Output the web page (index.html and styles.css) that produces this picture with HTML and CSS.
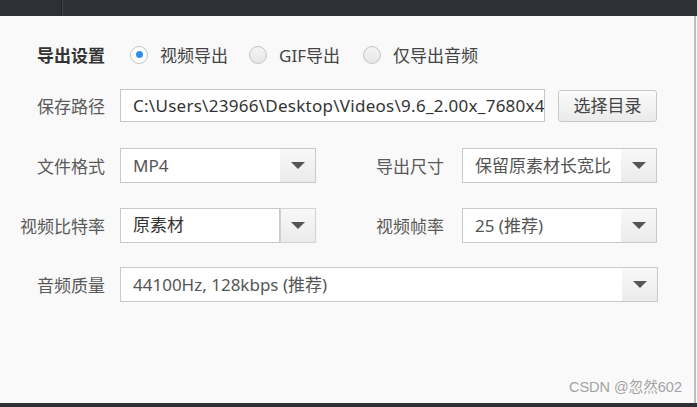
FILE: index.html
```html
<!DOCTYPE html>
<html lang="zh">
<head>
<meta charset="utf-8">
<title>导出设置</title>
<link rel="stylesheet" href="styles.css">
</head>
<body>
<div class="topbar"><div class="tab"></div><div class="tab-div"></div></div>
<div class="main">
  <div class="panel">
    <div class="row r1">
      <div class="lbl strong">导出设置</div>
      <div class="radios">
        <label class="radio"><span class="circle on"></span><span>视频导出</span></label>
        <label class="radio"><span class="circle"></span><span>GIF导出</span></label>
        <label class="radio"><span class="circle"></span><span>仅导出音频</span></label>
      </div>
    </div>
    <div class="row r2">
      <div class="lbl">保存路径</div>
      <div class="path">C:\Users\23966\Desktop\Videos\9.6_2.00x_7680x4</div>
      <div class="btn">选择目录</div>
    </div>
    <div class="row r3">
      <div class="lbl">文件格式</div>
      <div class="select"><span class="val">MP4</span><span class="arr"><i></i></span></div>
      <div class="lbl2">导出尺寸</div>
      <div class="select w2"><span class="val">保留原素材长宽比</span><span class="arr"><i></i></span></div>
    </div>
    <div class="row r4">
      <div class="lbl">视频比特率</div>
      <div class="combo"><span class="cval">原素材</span><span class="carr"><i></i></span></div>
      <div class="lbl2">视频帧率</div>
      <div class="select w2"><span class="val">25 (推荐)</span><span class="arr"><i></i></span></div>
    </div>
    <div class="row r5">
      <div class="lbl">音频质量</div>
      <div class="select wide"><span class="val">44100Hz, 128kbps (推荐)</span><span class="arr"><i></i></span></div>
    </div>
    <div class="mark">CSDN @忽然602</div>
  </div>
  <div class="vline"></div>
</div>
<div class="bottombar"></div>
</body>
</html>
```
FILE: styles.css
```css
* { box-sizing: border-box; }
html, body { margin: 0; padding: 0; }
body {
  width: 697px;
  height: 407px;
  overflow: hidden;
  background: #f9f9f9;
  font-family: "Noto Sans", "Noto Sans CJK SC", sans-serif;
  font-size: 17px;
  color: #555;
  display: flex;
  flex-direction: column;
}
.topbar {
  height: 16px;
  background: #2f3035;
  display: flex;
  flex: none;
}
.tab { width: 61px; }
.tab-div { width: 2px; background: #1f2024; border-right: 1px solid #45464b; }
.main {
  flex: 1;
  display: flex;
}
.panel {
  flex: 1;
  display: flex;
  flex-direction: column;
  padding-top: 23px;
}
.vline {
  width: 2px;
  background: #bdbdbd;
  margin-right: 1px;
}
.bottombar {
  height: 4px;
  background: #2f3035;
  flex: none;
}
.row {
  display: flex;
  align-items: center;
}
.r1 { height: 34px; }
.r2 { height: 33px; margin-top: 16px; }
.r3 { height: 35px; margin-top: 26px; }
.r4 { height: 35px; margin-top: 25px; }
.r5 { height: 35px; margin-top: 24px; }
.lbl {
  width: 105px;
  margin-right: 15px;
  text-align: right;
  white-space: nowrap;
  color: #5a5a5a;
}
.lbl.strong { font-weight: bold; color: #333; margin-top: -3px; }
.lbl2 {
  width: 128px;
  margin-right: 18px;
  text-align: right;
  color: #5a5a5a;
}
.radios {
  display: grid;
  grid-template-columns: 119px 114px auto;
  margin-left: 10px;
  margin-top: -3px;
  color: #444;
}
.radio {
  display: flex;
  align-items: center;
  gap: 12px;
}
.circle {
  width: 18px;
  height: 18px;
  border-radius: 50%;
  border: 1px solid #c4c4c4;
  background: linear-gradient(#f4f4f4, #e6e6e6);
  display: flex;
  align-items: center;
  justify-content: center;
}
.circle.on { background: #fff; }
.circle.on::after {
  content: "";
  width: 7px;
  height: 7px;
  border-radius: 50%;
  background: #2f8ff0;
}
.path {
  width: 425px;
  height: 33px;
  border: 1px solid #c6c6c6;
  background: #fff;
  padding-left: 12px;
  line-height: 31px;
  white-space: nowrap;
  overflow: hidden;
  letter-spacing: 0.27px;
  color: #333;
}
.btn {
  margin-left: 13px;
  width: 99px;
  height: 32px;
  border: 1px solid #c9c9c9;
  border-radius: 3px;
  background: linear-gradient(#fbfbfb, #eaeaea);
  text-align: center;
  line-height: 30px;
  color: #444;
}
.select {
  width: 196px;
  height: 35px;
  border: 1px solid #c9c9c9;
  background: #fff;
  display: flex;
}
.select.w2 { width: 195px; }
.select.wide { width: 538px; }
.val {
  flex: 1;
  padding-left: 12px;
  line-height: 33px;
  white-space: nowrap;
  overflow: hidden;
  color: #555;
}
.arr, .carr {
  width: 35px;
  background: linear-gradient(#f8f8f8, #ebebeb);
  display: flex;
  align-items: center;
  justify-content: center;
}
.arr i, .carr i {
  width: 0;
  height: 0;
  border-left: 7px solid transparent;
  border-right: 7px solid transparent;
  border-top: 7px solid #555;
}
.combo {
  width: 196px;
  height: 35px;
  display: flex;
}
.cval {
  width: 160px;
  border: 1px solid #c9c9c9;
  background: #fff;
  padding-left: 12px;
  line-height: 31px;
  color: #333;
}
.carr {
  width: 36px;
  border: 1px solid #d2d2d2;
  border-left: 1px solid #cfcfcf;
}
.mark {
  margin-top: auto;
  margin-bottom: 7px;
  align-self: flex-end;
  margin-right: 12px;
  font-family: "Liberation Sans", "Noto Sans CJK SC", sans-serif;
  font-size: 14.5px;
  color: #a3a3a3;
}
```
